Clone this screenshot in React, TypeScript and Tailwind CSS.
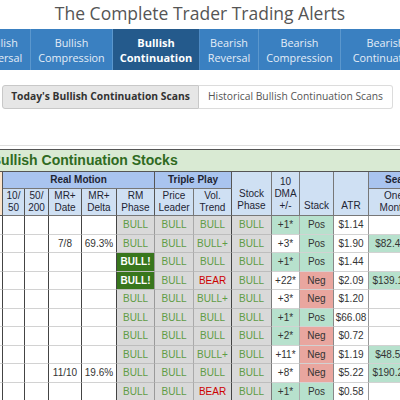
import React from "react";

type Row = {
  date?: string;
  delta?: string;
  rm: string;
  pl: string;
  vt: string;
  sp: string;
  dma: string;
  dmaG: boolean;
  stack: "Pos" | "Neg";
  atr: string;
  om?: string;
};

const rows: Row[] = [
  { rm: "BULL", pl: "BULL", vt: "BULL", sp: "BULL", dma: "+1*", dmaG: true, stack: "Pos", atr: "$1.14" },
  { date: "7/8", delta: "69.3%", rm: "BULL", pl: "BULL", vt: "BULL+", sp: "BULL", dma: "+3*", dmaG: false, stack: "Pos", atr: "$1.90", om: "$82.46" },
  { rm: "BULL!", pl: "BULL", vt: "BULL", sp: "BULL", dma: "+1*", dmaG: true, stack: "Pos", atr: "$1.44" },
  { rm: "BULL!", pl: "BULL", vt: "BEAR", sp: "BULL", dma: "+22*", dmaG: false, stack: "Neg", atr: "$2.09", om: "$139.18" },
  { rm: "BULL", pl: "BULL", vt: "BULL+", sp: "BULL", dma: "+3*", dmaG: false, stack: "Neg", atr: "$1.20" },
  { rm: "BULL", pl: "BULL", vt: "BULL", sp: "BULL", dma: "+1*", dmaG: true, stack: "Pos", atr: "$66.08" },
  { rm: "BULL", pl: "BULL", vt: "BULL", sp: "BULL", dma: "+2*", dmaG: true, stack: "Neg", atr: "$0.72" },
  { rm: "BULL", pl: "BULL", vt: "BULL+", sp: "BULL", dma: "+11*", dmaG: false, stack: "Neg", atr: "$1.19", om: "$48.55" },
  { date: "11/10", delta: "19.6%", rm: "BULL", pl: "BULL", vt: "BULL", sp: "BULL", dma: "+8*", dmaG: false, stack: "Neg", atr: "$5.22", om: "$190.22" },
  { rm: "BULL", pl: "BULL", vt: "BEAR", sp: "BULL", dma: "+1*", dmaG: true, stack: "Pos", atr: "$0.58" },
];

const tabs = [
  { a: "Bullish", b: "Reversal", w: "w-[59px]", active: false },
  { a: "Bullish", b: "Compression", w: "w-[82px]", active: false },
  { a: "Bullish", b: "Continuation", w: "w-[87px]", active: true },
  { a: "Bearish", b: "Reversal", w: "w-[59px]", active: false },
  { a: "Bearish", b: "Compression", w: "w-[82px]", active: false },
  { a: "Bearish", b: "Continuation", w: "w-[90px]", active: false },
];

function phaseCell(v: string, border: string) {
  if (v === "BULL!") {
    return (
      <td className={`h-[18.5px] p-0 text-center font-bold text-white bg-[#38761d] border-b border-b-[#bdbdbd] border-r ${border}`}>
        BULL!
      </td>
    );
  }
  const color = v === "BEAR" ? "text-[#cc0000]" : "text-[#5f9c45]";
  return (
    <td className={`h-[18.5px] p-0 text-center bg-[#d9d9d9] border-b border-b-[#bdbdbd] border-r ${border} ${color}`}>{v}</td>
  );
}

export default function App() {
  const th = "p-0 text-center text-[10px] leading-[12px] text-[#1e2533] border-b border-r border-[#777]";
  const td = "h-[18.5px] p-0 text-center text-[#333] border-b border-b-[#d2d2d2] border-r";
  return (
    <div className="w-[400px] h-[400px] overflow-hidden bg-white">
      <div
        className="h-[29px] flex items-center justify-center pb-[3px] text-[17.5px] text-[#555]"
        style={{ fontFamily: '"Open Sans", sans-serif' }}
      >
        The Complete Trader Trading Alerts
      </div>

      <nav
        className="h-[41px] bg-[#3a80c1] flex overflow-hidden"
        style={{ fontFamily: '"Open Sans", sans-serif' }}
      >
        <div className="flex -ml-[28px] shrink-0">
          {tabs.map((t, i) => (
            <div
              key={i}
              className={
                t.active
                  ? `${t.w} shrink-0 flex flex-col items-center justify-center text-[11px] leading-[15px] font-bold text-white bg-[#245a8c] border-r border-[#4d8ac4]`
                  : `${t.w} shrink-0 flex flex-col items-center justify-center text-[10.8px] leading-[15px] text-[#e4edf7] border-r border-[#5b97cd]`
              }
            >
              <span>{t.a}</span>
              <span>{t.b}</span>
            </div>
          ))}
        </div>
      </nav>

      <div className="mt-[15px] ml-[2px] flex h-[24px]" style={{ fontFamily: '"Open Sans", sans-serif' }}>
        <div className="w-[197px] flex items-center justify-center bg-[#e6e6e6] border border-[#c8c8c8] rounded-l-[3px] text-[10.3px] font-bold text-[#333]">
          Today's Bullish Continuation Scans
        </div>
        <div className="w-[194px] flex items-center justify-center bg-white border border-l-0 border-[#dcdcdc] rounded-r-[3px] text-[10.3px] text-[#555]">
          Historical Bullish Continuation Scans
        </div>
      </div>

      <div className="mt-[36px] h-px bg-[#dedede]" />

      <div className="mt-[3px] overflow-hidden" style={{ fontFamily: '"Liberation Sans", Arial, sans-serif' }}>
        <table className="table-fixed border-separate border-spacing-0 w-[458px] text-[10px]">
          <colgroup>
            <col className="w-[3px]" />
            <col className="w-[22px]" />
            <col className="w-[24px]" />
            <col className="w-[33px]" />
            <col className="w-[35px]" />
            <col className="w-[38px]" />
            <col className="w-[39px]" />
            <col className="w-[38px]" />
            <col className="w-[40px]" />
            <col className="w-[28px]" />
            <col className="w-[34px]" />
            <col className="w-[35px]" />
            <col className="w-[44px]" />
            <col className="w-[45px]" />
          </colgroup>
          <thead>
            <tr>
              <th
                colSpan={14}
                className="h-[22px] p-0 text-left bg-[#d9ead3] border-t border-b border-[#555] text-[14px] font-bold text-[#2f6b22]"
              >
                <span className="block -ml-[9px] whitespace-nowrap">Bullish Continuation Stocks</span>
              </th>
            </tr>
            <tr>
              <th rowSpan={2} className="p-0 bg-[#fce5cd] border-b border-r border-[#555]" />
              <th colSpan={5} className={`${th} h-[17px] font-bold bg-[#a9c4ef] border-r-[#555]`}>Real Motion</th>
              <th colSpan={2} className={`${th} h-[17px] font-bold bg-[#a9c4ef] border-r-[#555]`}>Triple Play</th>
              <th rowSpan={2} className={`${th} font-normal align-bottom pb-[3px] bg-[#cfe0f3]`}>
                Stock<br />Phase
              </th>
              <th rowSpan={2} className={`${th} font-normal align-bottom pb-[3px] bg-[#cfe0f3]`}>
                10<br />DMA<br />+/-
              </th>
              <th rowSpan={2} className={`${th} font-normal align-bottom pb-[3px] bg-[#cfe0f3]`}>Stack</th>
              <th rowSpan={2} className={`${th} font-normal align-bottom pb-[3px] bg-[#cfe0f3]`}>ATR</th>
              <th colSpan={2} className={`${th} h-[17px] font-bold bg-[#a9c4ef]`}>
                <div className="text-left pl-[16px] whitespace-nowrap">Seasonality</div>
              </th>
            </tr>
            <tr>
              <th className={`${th} font-normal h-[27px] bg-[#cfe0f3] border-r-[#555]`}>10/<br />50</th>
              <th className={`${th} font-normal h-[27px] bg-[#cfe0f3] border-r-[#555]`}>50/<br />200</th>
              <th className={`${th} font-normal h-[27px] bg-[#cfe0f3] border-r-[#555]`}>MR+<br />Date</th>
              <th className={`${th} font-normal h-[27px] bg-[#cfe0f3] border-r-[#555]`}>MR+<br />Delta</th>
              <th className={`${th} font-normal h-[27px] bg-[#cfe0f3] border-r-[#555]`}>RM<br />Phase</th>
              <th className={`${th} font-normal h-[27px] bg-[#cfe0f3]`}>Price<br />Leader</th>
              <th className={`${th} font-normal h-[27px] bg-[#cfe0f3] border-r-[#555]`}>Vol.<br />Trend</th>
              <th className={`${th} font-normal h-[27px] bg-[#cfe0f3] pl-[6px]`}>One<br />Month</th>
              <th className={`${th} font-normal h-[27px] bg-[#cfe0f3]`}>Two<br />Month</th>
            </tr>
          </thead>
          <tbody>
            {rows.map((r, i) => (
              <tr key={i}>
                <td className={`${td} border-r-[#444]`} />
                <td className={`${td} border-r-[#444]`} />
                <td className={`${td} border-r-[#444]`} />
                <td className={`${td} border-r-[#444]`}>{r.date ?? ""}</td>
                <td className={`${td} border-r-[#444]`}>{r.delta ?? ""}</td>
                {phaseCell(r.rm, "border-r-[#9a9a9a]")}
                {phaseCell(r.pl, "border-r-[#aaa]")}
                {phaseCell(r.vt, "border-r-[#444]")}
                {phaseCell(r.sp, "border-r-[#7a7a7a]")}
                <td className={`${td} border-r-[#aaa] ${r.dmaG ? "bg-[#b7e1cd]" : "bg-white"}`}>{r.dma}</td>
                <td className={`${td} border-r-[#888] ${r.stack === "Pos" ? "bg-[#b7e1cd]" : "bg-[#e9a69f]"}`}>{r.stack}</td>
                <td className={`${td} border-r-[#999] bg-white`}>{r.atr}</td>
                <td className={`${td} border-r-[#bbb] ${r.om ? "bg-[#b7e1cd]" : "bg-white"}`}>{r.om ?? ""}</td>
                <td className={`${td} border-r-[#bbb] bg-white`} />
              </tr>
            ))}
          </tbody>
        </table>
      </div>
    </div>
  );
}
